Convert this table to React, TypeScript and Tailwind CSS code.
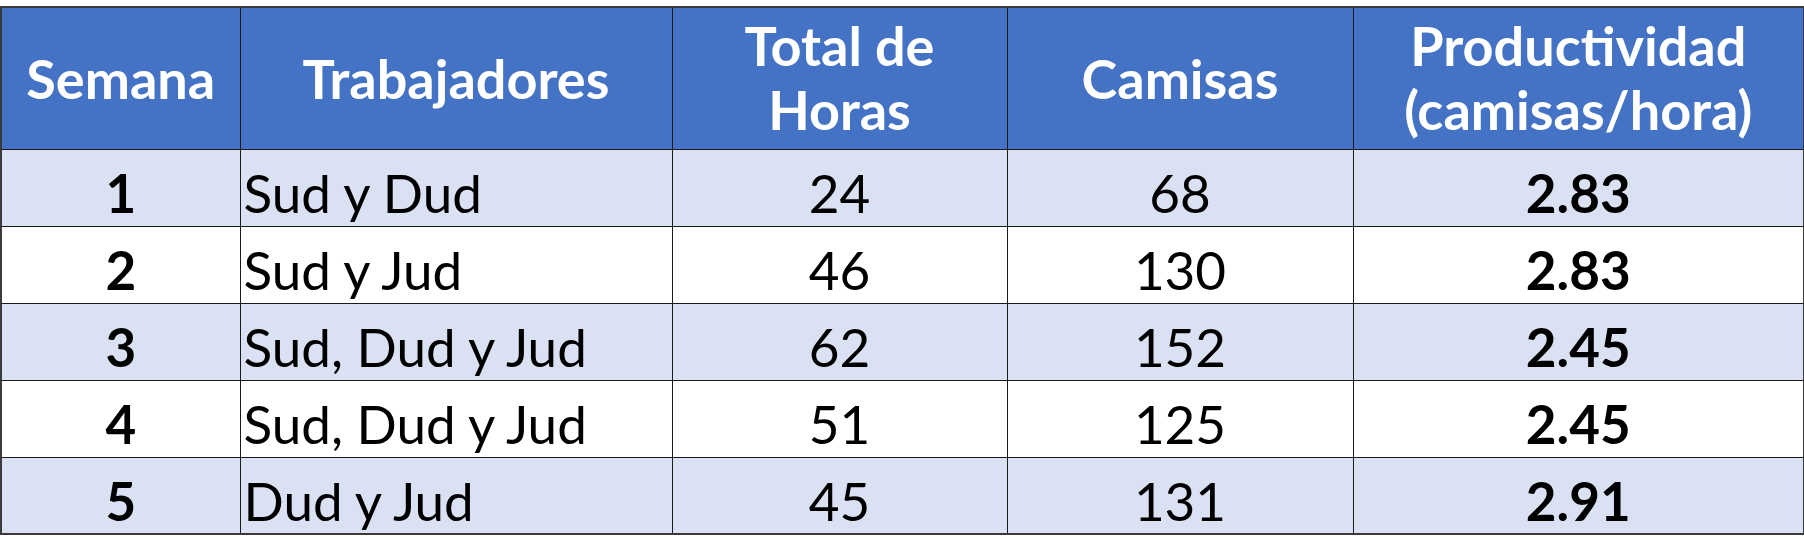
import React from "react";

const rows = [
  { s: "1", t: "Sud y Dud", h: "24", c: "68", p: "2.83" },
  { s: "2", t: "Sud y Jud", h: "46", c: "130", p: "2.83" },
  { s: "3", t: "Sud, Dud y Jud", h: "62", c: "152", p: "2.45" },
  { s: "4", t: "Sud, Dud y Jud", h: "51", c: "125", p: "2.45" },
  { s: "5", t: "Dud y Jud", h: "45", c: "131", p: "2.91" },
];

export default function App() {
  return (
    <div
      className="w-[1804px] h-[539px] bg-white pt-[6px]"
      style={{ fontFamily: "Lato, 'Open Sans', sans-serif" }}
    >
      <table className="border-collapse w-[1803px] table-fixed border-2 border-[#3a3a3a]">
        <colgroup>
          <col className="w-[239px]" />
          <col className="w-[432px]" />
          <col className="w-[335px]" />
          <col className="w-[346px]" />
          <col className="w-[451px]" />
        </colgroup>
        <thead>
          <tr className="h-[142px] bg-[#4472C4] text-white font-bold text-[54px] leading-[64px]">
            <th className="border border-[#1a1a1a] font-bold text-center pt-[2px]">Semana</th>
            <th className="border border-[#1a1a1a] font-bold text-center pt-[2px]">Trabajadores</th>
            <th className="border border-[#1a1a1a] font-bold text-center">
              Total de
              <br />
              Horas
            </th>
            <th className="border border-[#1a1a1a] font-bold text-center pt-[2px]">Camisas</th>
            <th className="border border-[#1a1a1a] font-bold text-center">
              Productividad
              <br />
              (camisas/hora)
            </th>
          </tr>
        </thead>
        <tbody>
          {rows.map((r, i) => (
            <tr
              key={r.s}
              className={
                (i % 2 === 0 ? "bg-[#D9E1F2] " : "bg-white ") +
                "h-[77px] text-black text-[53px] leading-none"
              }
            >
              <td className="border border-[#1a1a1a] text-center font-bold pt-[10px]">{r.s}</td>
              <td className="border border-[#1a1a1a] text-left pl-[3px] pt-[10px]">{r.t}</td>
              <td className="border border-[#1a1a1a] text-center pt-[10px]">{r.h}</td>
              <td className="border border-[#1a1a1a] text-center pt-[10px]">{r.c}</td>
              <td className="border border-[#1a1a1a] text-center font-bold pt-[10px]">{r.p}</td>
            </tr>
          ))}
        </tbody>
      </table>
    </div>
  );
}
